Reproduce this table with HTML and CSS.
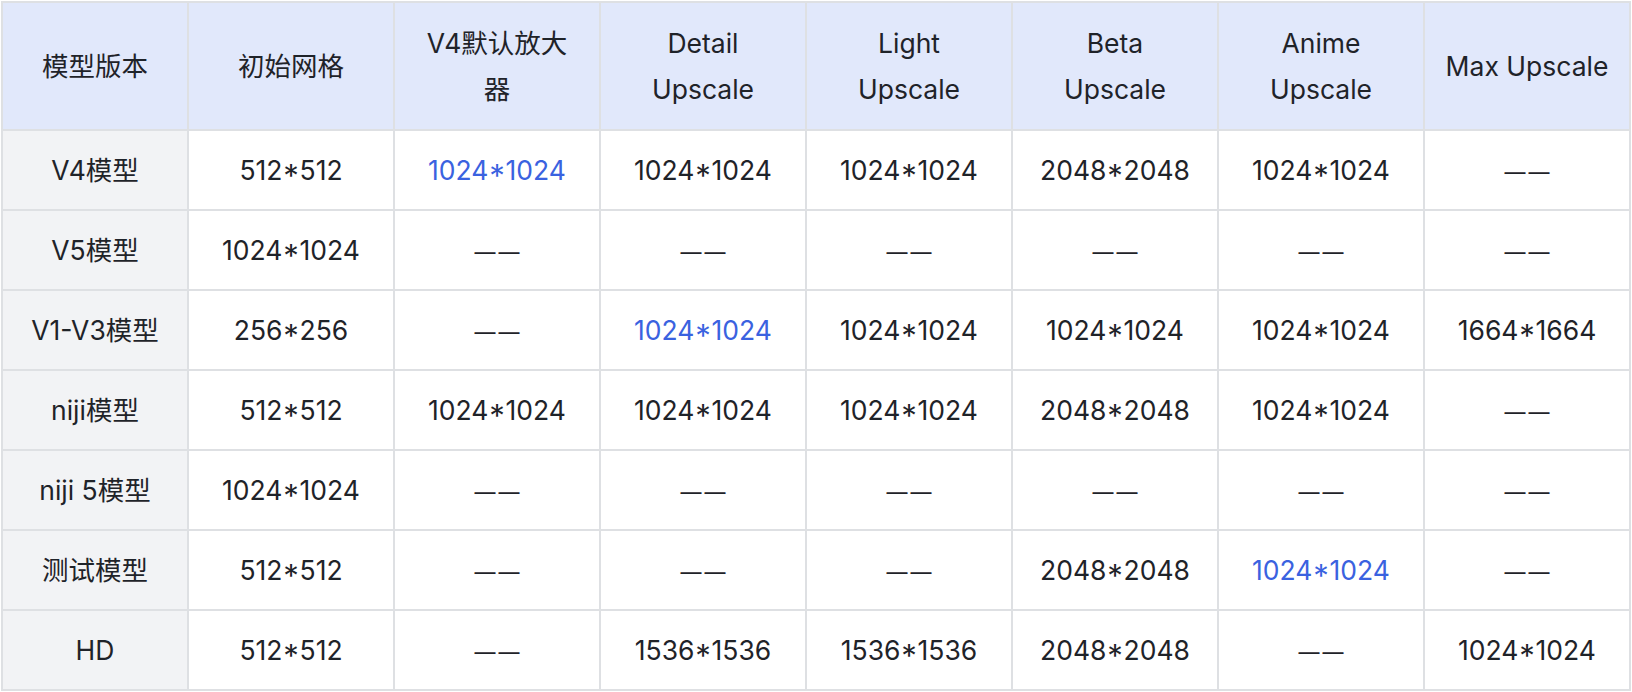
FILE: index.html
```html
<!DOCTYPE html>
<html lang="zh-CN">
<head>
<meta charset="utf-8">
<title>模型版本</title>
<link rel="stylesheet" href="styles.css">
</head>
<body>
<table class="grid">
  <colgroup>
    <col class="c-first">
    <col class="c"><col class="c"><col class="c"><col class="c"><col class="c"><col class="c"><col class="c">
  </colgroup>
  <thead>
    <tr>
      <th>模型版本</th>
      <th>初始网格</th>
      <th>V4默认放大<br>器</th>
      <th>Detail<br>Upscale</th>
      <th>Light<br>Upscale</th>
      <th>Beta<br>Upscale</th>
      <th>Anime<br>Upscale</th>
      <th>Max Upscale</th>
    </tr>
  </thead>
  <tbody>
    <tr>
      <th>V4模型</th>
      <td>512*512</td>
      <td class="hl">1024*1024</td>
      <td>1024*1024</td>
      <td>1024*1024</td>
      <td>2048*2048</td>
      <td>1024*1024</td>
      <td><span class="dash">——</span></td>
    </tr>
    <tr>
      <th>V5模型</th>
      <td>1024*1024</td>
      <td><span class="dash">——</span></td>
      <td><span class="dash">——</span></td>
      <td><span class="dash">——</span></td>
      <td><span class="dash">——</span></td>
      <td><span class="dash">——</span></td>
      <td><span class="dash">——</span></td>
    </tr>
    <tr>
      <th>V1-V3模型</th>
      <td>256*256</td>
      <td><span class="dash">——</span></td>
      <td class="hl">1024*1024</td>
      <td>1024*1024</td>
      <td>1024*1024</td>
      <td>1024*1024</td>
      <td>1664*1664</td>
    </tr>
    <tr>
      <th>niji模型</th>
      <td>512*512</td>
      <td>1024*1024</td>
      <td>1024*1024</td>
      <td>1024*1024</td>
      <td>2048*2048</td>
      <td>1024*1024</td>
      <td><span class="dash">——</span></td>
    </tr>
    <tr>
      <th>niji 5模型</th>
      <td>1024*1024</td>
      <td><span class="dash">——</span></td>
      <td><span class="dash">——</span></td>
      <td><span class="dash">——</span></td>
      <td><span class="dash">——</span></td>
      <td><span class="dash">——</span></td>
      <td><span class="dash">——</span></td>
    </tr>
    <tr>
      <th>测试模型</th>
      <td>512*512</td>
      <td><span class="dash">——</span></td>
      <td><span class="dash">——</span></td>
      <td><span class="dash">——</span></td>
      <td>2048*2048</td>
      <td class="hl">1024*1024</td>
      <td><span class="dash">——</span></td>
    </tr>
    <tr>
      <th>HD</th>
      <td>512*512</td>
      <td><span class="dash">——</span></td>
      <td>1536*1536</td>
      <td>1536*1536</td>
      <td>2048*2048</td>
      <td><span class="dash">——</span></td>
      <td>1024*1024</td>
    </tr>
  </tbody>
</table>
</body>
</html>
```

FILE: styles.css
```css
html, body {
  margin: 0;
  background: #ffffff;
}
body {
  padding: 1px;
  font-family: Inter, "Noto Sans CJK SC", sans-serif;
  color: #1f2329;
}
.grid {
  border-collapse: collapse;
  table-layout: fixed;
  width: 1629px;
  font-size: 26.5px;
  line-height: 46px;
}
.c-first { width: 186px; }
.c { width: 206px; }
.grid th,
.grid td {
  border: 2px solid #dee0e3;
  padding: 16px 8px;
  text-align: center;
  vertical-align: middle;
  font-weight: 400;
  white-space: nowrap;
}
.grid thead th {
  background: #e1e8fb;
  padding-top: 17px;
  padding-bottom: 17px;
}
.grid tbody th {
  background: #f2f3f5;
}
.grid td {
  background: #ffffff;
}
.grid .hl {
  color: #3a62e0;
}
.dash {
  font-size: 21px;
  line-height: 1;
  letter-spacing: 3px;
  margin-right: -3px;
}
```
